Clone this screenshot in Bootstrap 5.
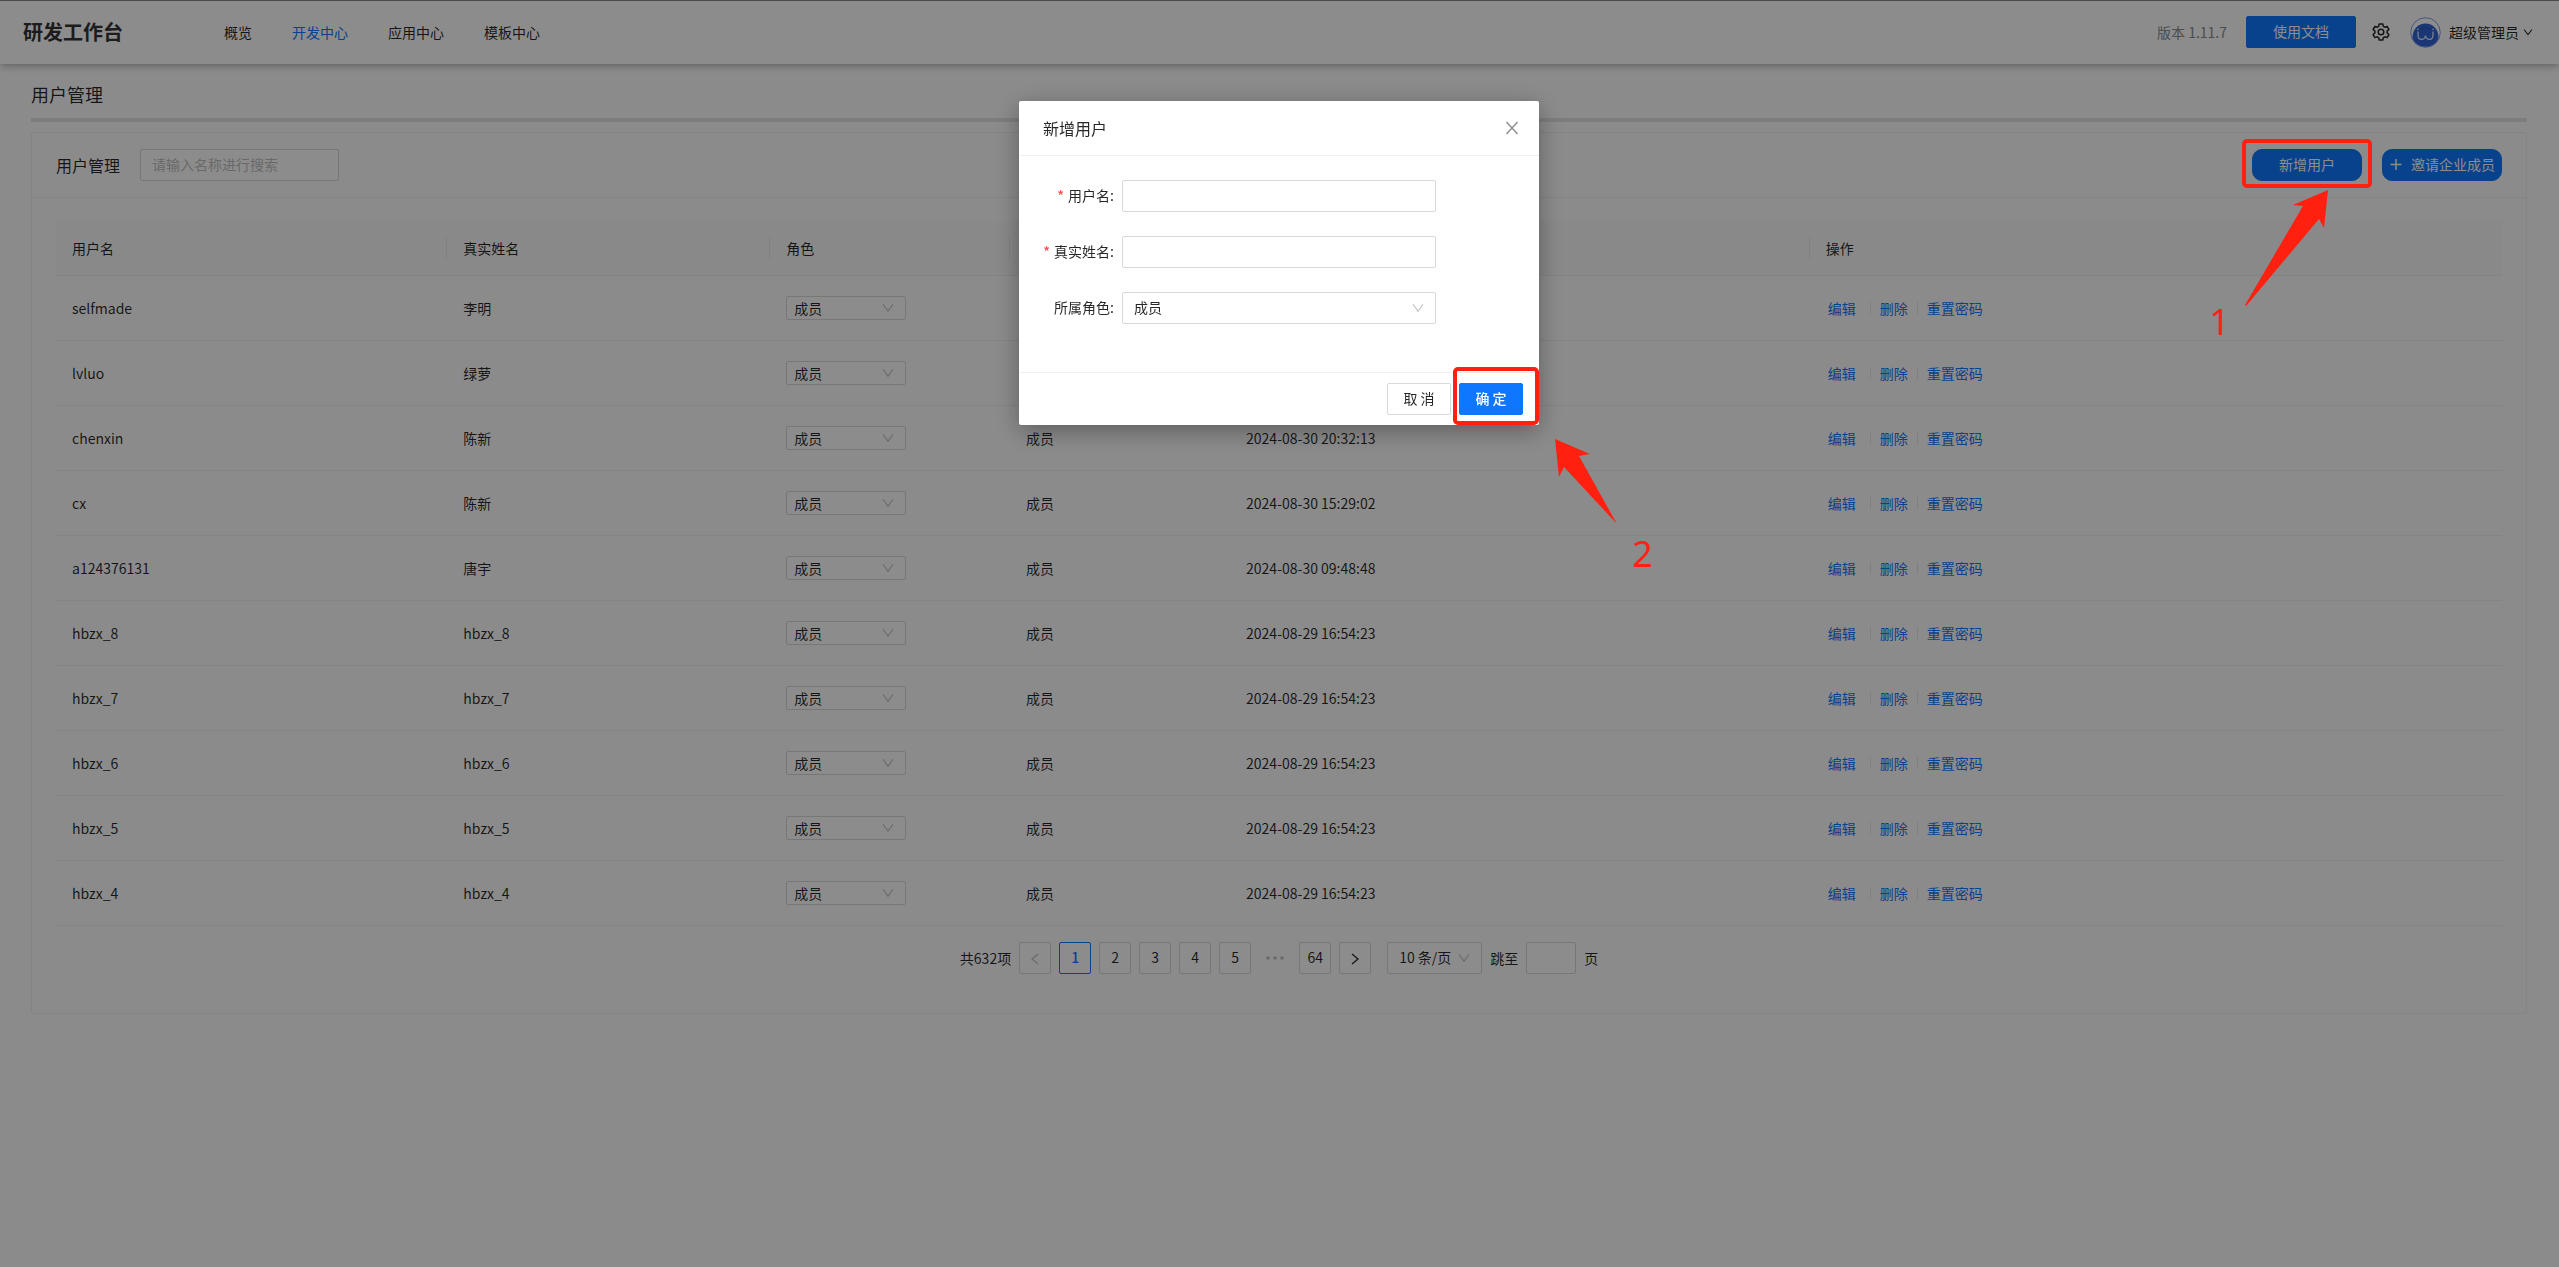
<!DOCTYPE html>
<html lang="zh-CN">
<head>
<meta charset="utf-8">
<meta name="viewport" content="width=device-width, initial-scale=1">
<title>研发工作台 - 用户管理</title>
<link rel="stylesheet" href="https://cdn.jsdelivr.net/npm/bootstrap@5.3.0/dist/css/bootstrap.min.css">
<style>
  :root { --brand: #0f77ff; --line: #f0f0f0; --ctl: #d9d9d9; --ink: rgba(0,0,0,.85); --mark-red: #ff2010; }
  body { font-family: "Noto Sans CJK SC", "Noto Sans", sans-serif; font-size: 14px; line-height: 22px; color: var(--ink); background: #fefefe; overflow: hidden; }
  a { color: var(--brand); text-decoration: none; }
  .btn, .form-control, .form-select { font-size: 14px; line-height: 22px; height: 32px; border-radius: 2px; color: var(--ink); }
  .btn { padding: 3px 15px 5px; }
  .btn-primary { --bs-btn-bg: var(--brand); --bs-btn-border-color: var(--brand); color: #fff; }
  .form-control, .form-select { border-color: var(--ctl); padding: 3px 11px 5px; box-shadow: none; }
  .form-control::placeholder { color: #bfbfbf; }
  .form-select { background-image: url("data:image/svg+xml,%3Csvg xmlns='http://www.w3.org/2000/svg' viewBox='0 0 12 12'%3E%3Cpath fill='none' stroke='%23bfbfbf' stroke-width='1.1' d='M1 2.2l5 7 5-7'/%3E%3C/svg%3E"); background-size: 12px 12px; background-position: right 11px center; }

  .topbar { height: 64px; border-top: 1px solid #868688; background: #fff; padding: 0 26px 1px 23px; box-shadow: 0 2px 8px rgba(0,0,0,.3); }
  .brand-name { font-size: 20px; font-weight: 700; width: 201px; color: #333; }
  .topnav { gap: 40px; }
  .topnav a { color: var(--ink); padding: 0; }
  .topnav a.active { color: var(--brand); }
  .version { color: #8c8c8c; margin-right: 19px; }
  .btn-wide { width: 110px; }
  .icon-btn { color: var(--ink); }

  .page-main { padding: 16px 32px 0 31px; }
  .page-title { font-size: 18px; line-height: 28px; margin: 0; padding-bottom: 10px; font-weight: 400; border-bottom: 4px solid #e4e4e4; box-sizing: content-box; }
  .panel { margin-top: 10px; border: 1px solid var(--line); border-radius: 2px; background: transparent; }
  .panel-head { height: 65px; padding: 0 24px; border-bottom: 1px solid var(--line); }
  .panel-name { font-size: 16px; margin: 0 20px 0 0; font-weight: 400; line-height: 24px; }
  .search-box { width: 199px; }
  .btn-round { border-radius: 10px; }
  .btn-invite { width: 120px; padding: 3px 6px 5px; }
  .panel-body { padding: 23px 24px 39px; }

  .user-table { table-layout: fixed; border-collapse: separate; border-spacing: 0; margin: 0; --bs-table-bg: transparent; --bs-table-color: var(--ink); color: var(--ink); }
  .user-table > thead th { background: #f9f9f9; height: 55px; font-weight: 400; position: relative; }
  .user-table > * > tr > * { padding: 0 16px; vertical-align: middle; border-bottom: 1px solid var(--line); }
  .user-table > tbody td { height: 65px; }
  .user-table thead th:not(:last-child)::after { content: ""; position: absolute; right: 0; top: 16px; height: 22px; border-right: 1px solid #ececec; }
  .c-user { width: 16%; } .c-name { width: 13.2%; } .c-role { width: 9.8%; } .c-tag { width: 9%; } .c-time { width: 23.7%; }
  .role-select { width: 120px; height: 24px; padding: 0 7px; line-height: 20px; vertical-align: middle; }
  .user-table td > .role-select { display: block; }
  .actions a:first-child { padding: 0 5px 0 2px; }
  .vr-line { width: 1px; height: 12px; margin: 0 9px; background: #e8e8e8; }

  .pager { margin-top: 16px; gap: 8px; }
  .pager .page-btn { width: 32px; padding: 3px 0 5px; border: 1px solid var(--ctl); background: #fff; }
  .pager .page-btn.active { border-color: var(--brand); color: var(--brand); font-weight: 500; }
  .pager .page-btn:disabled { color: #bfbfbf; opacity: 1; }
  .dots { width: 32px; color: #bfbfbf; }
  .size-select { width: 95px; margin-left: 8px; }
  .jump-box { width: 50px; }

  .modal-backdrop.show { opacity: .45; }
  .modal-layer { padding-right: 1px; }
  .user-modal { max-width: 520px; margin: 101px auto; }
  .user-modal .modal-content { border: 0; border-radius: 2px; box-shadow: 0 6px 24px rgba(0,0,0,.35); color: var(--ink); }
  .user-modal .modal-header { height: 55px; padding: 0 20px 0 24px; border-bottom: 1px solid var(--line); border-radius: 0; }
  .user-modal .modal-title { font-size: 16px; line-height: 22px; font-weight: 400; }
  .close-x { border: 0; background: none; padding: 0; color: #8c8c8c; line-height: 0; }
  .user-modal .modal-body { padding: 24px 24px 24px 20px; }
  .field { margin-bottom: 24px; }
  .field-label { width: 75px; margin-right: 8px; padding-bottom: 2px; text-align: right; white-space: nowrap; }
  .field-label .req { color: #ff4d4f; margin-right: 4px; font-weight: 500; }
  .field .form-control, .field .form-select { width: 314px; }
  .user-modal .modal-footer { padding: 10px 16px; gap: 8px; border-top: 1px solid var(--line); border-radius: 0; }
  .user-modal .modal-footer > * { margin: 0; width: 64px; padding: 3px 0 5px; }
  .btn-cancel { border: 1px solid var(--ctl); background: #fff; }

  .note { position: absolute; z-index: 2000; pointer-events: none; overflow: visible; }
  .note rect { fill: none; stroke: var(--mark-red); stroke-width: 4; }
  .note path, .note text { fill: var(--mark-red); }
  .note text { font-family: "Noto Sans", sans-serif; font-size: 36px; }
  .note-add { top: 130px; right: 179px; }
  .note-ok { top: 259px; left: 430px; }
</style>
</head>
<body>
<header class="topbar d-flex align-items-center position-relative">
  <div class="brand-name">研发工作台</div>
  <nav class="topnav d-flex">
    <a href="#">概览</a>
    <a href="#" class="active">开发中心</a>
    <a href="#">应用中心</a>
    <a href="#">模板中心</a>
  </nav>
  <div class="ms-auto d-flex align-items-center">
    <span class="version">版本 1.11.7</span>
    <button type="button" class="btn btn-primary btn-wide">使用文档</button>
    <a href="#" class="icon-btn d-flex ms-3" aria-label="设置">
      <svg width="18" height="18" viewBox="0 0 18 18" fill="none" stroke="currentColor" stroke-width="1.5" stroke-linejoin="round"><path d="M7.2 1h3.6l.5 2.3 1.5.9 2.3-.8 1.8 3.1-1.8 1.6v1.8l1.8 1.6-1.8 3.1-2.3-.8-1.5.9-.5 2.3H7.2l-.5-2.3-1.5-.9-2.3.8-1.8-3.1 1.8-1.6V8.1L1.1 6.5l1.8-3.1 2.3.8 1.5-.9z"/><circle cx="9" cy="9" r="2.8"/></svg>
    </a>
    <a href="#" class="icon-btn d-flex align-items-center ms-3">
      <svg class="me-2 ms-1" width="31" height="31" viewBox="0 0 31 31"><circle cx="15.5" cy="15.5" r="14.8" fill="#fff" stroke="#7f9de0" stroke-width="1"/><path d="M2.500 21C2.500 12 8 6.500 15.500 6.500S28.500 12 28.500 21c-2 5.500-7 8.700-13 8.700S4.500 26.500 2.500 21z" fill="#3263d6"/><path d="M8 13.500q7.500-4.500 15 0" fill="none" stroke="#1f46a8" stroke-dasharray="2 1.5"/><path d="M8 14.500v3.500c0 6 7 5.500 7.500.5.500 5 7.500 5.500 7.500-.5v-3.500" fill="none" stroke="#dfe8ff" stroke-width="1.3"/><path d="M7 12.300h2M22 12.300h2" stroke="#dfe8ff"/></svg>
      <span>超级管理员</span>
      <svg class="ms-1" width="10" height="10" viewBox="0 0 10 10" fill="none" stroke="currentColor" stroke-width="1.1"><path d="M1 2.5l4 5 4-5"/></svg>
    </a>
  </div>
</header>

<main class="page-main">
  <h1 class="page-title">用户管理</h1>
  <section class="panel">
    <div class="panel-head d-flex align-items-center">
      <h2 class="panel-name">用户管理</h2>
      <input class="form-control search-box" type="text" placeholder="请输入名称进行搜索" aria-label="搜索">
      <div class="ms-auto d-flex">
        <button type="button" class="btn btn-primary btn-wide btn-round me-3">新增用户</button>
        <button type="button" class="btn btn-primary btn-invite btn-round d-flex align-items-center justify-content-between ms-1">
          <svg width="14" height="14" viewBox="0 0 14 14" stroke="currentColor" stroke-width="1.5"><path d="M7 2v11M1.500 7.500h11"/></svg><span>邀请企业成员</span>
        </button>
      </div>
    </div>
    <div class="panel-body">
      <table class="table user-table">
        <colgroup><col class="c-user"><col class="c-name"><col class="c-role"><col class="c-tag"><col class="c-time"><col></colgroup>
        <thead><tr><th>用户名</th><th>真实姓名</th><th>角色</th><th></th><th></th><th>操作</th></tr></thead>
        <tbody id="userRows"></tbody>
      </table>
      <div class="pager d-flex align-items-center justify-content-center">
        <span>共632项</span>
        <button type="button" class="btn page-btn" disabled aria-label="上一页"><svg width="10" height="12" viewBox="0 0 10 12" fill="none" stroke="currentColor" stroke-width="1.1"><path d="M8 1L2 6l6 5"/></svg></button>
        <button type="button" class="btn page-btn active">1</button>
        <button type="button" class="btn page-btn">2</button>
        <button type="button" class="btn page-btn">3</button>
        <button type="button" class="btn page-btn">4</button>
        <button type="button" class="btn page-btn">5</button>
        <span class="dots d-flex justify-content-center"><svg width="18" height="4" viewBox="0 0 18 4" fill="currentColor"><circle cx="2" cy="2" r="1.8"/><circle cx="9" cy="2" r="1.8"/><circle cx="16" cy="2" r="1.8"/></svg></span>
        <button type="button" class="btn page-btn">64</button>
        <button type="button" class="btn page-btn" aria-label="下一页"><svg width="10" height="12" viewBox="0 0 10 12" fill="none" stroke="currentColor" stroke-width="1.3"><path d="M2 1l6 5-6 5"/></svg></button>
        <select class="form-select size-select" aria-label="每页条数"><option>10 条/页</option></select>
        <label for="jumpTo">跳至</label>
        <input id="jumpTo" class="form-control jump-box" type="text">
        <span>页</span>
      </div>
    </div>
  </section>
</main>

<div class="modal-backdrop show"></div>
<div class="modal modal-layer show d-block" tabindex="-1" role="dialog" aria-labelledby="modalTitle">
  <div class="modal-dialog user-modal">
    <form class="modal-content">
      <div class="modal-header">
        <h5 class="modal-title" id="modalTitle">新增用户</h5>
        <button type="button" class="close-x" aria-label="关闭"><svg width="14" height="14" viewBox="0 0 14 14" fill="none" stroke="currentColor" stroke-width="1.4"><path d="M1.500 1l11 12M12.500 1l-11 12"/></svg></button>
      </div>
      <div class="modal-body">
        <div class="field d-flex align-items-center"><label class="field-label" for="fUser"><span class="req">*</span>用户名:</label><input id="fUser" class="form-control" type="text"></div>
        <div class="field d-flex align-items-center"><label class="field-label" for="fReal"><span class="req">*</span>真实姓名:</label><input id="fReal" class="form-control" type="text"></div>
        <div class="field d-flex align-items-center"><label class="field-label" for="fRole">所属角色:</label><select id="fRole" class="form-select"><option>成员</option></select></div>
      </div>
      <div class="modal-footer">
        <button type="button" class="btn btn-cancel">取 消</button>
        <button type="button" class="btn btn-primary fw-medium">确 定</button>
      </div>
      <svg class="note note-ok" width="220" height="220" viewBox="0 0 220 220">
        <rect x="6" y="9" width="82" height="54" rx="3"/>
        <path d="M106 79l35 15-11 2 38 68-53-57-5 10z"/>
        <text x="183" y="207">2</text>
      </svg>
    </form>
  </div>
</div>

<svg class="note note-add" width="180" height="215" viewBox="0 0 180 215">
  <rect x="44" y="11" width="126" height="45" rx="3"/>
  <path d="M128 60l-35 15 10 1-58 99 1 1 73-87 5 9z"/>
  <text x="9" y="205">1</text>
</svg>

<script>
  const users = [
    ["selfmade", "李明", "", ""],
    ["lvluo", "绿萝", "", ""],
    ["chenxin", "陈新", "成员", "2024-08-30 20:32:13"],
    ["cx", "陈新", "成员", "2024-08-30 15:29:02"],
    ["a124376131", "唐宇", "成员", "2024-08-30 09:48:48"],
    ...[8, 7, 6, 5, 4].map(n => ["hbzx_" + n, "hbzx_" + n, "成员", "2024-08-29 16:54:23"])
  ];
  document.getElementById("userRows").innerHTML = users.map(([u, n, r, t]) => `
    <tr><td>${u}</td><td>${n}</td>
      <td><select class="form-select role-select" aria-label="${u} 角色"><option>成员</option></select></td>
      <td>${r}</td><td>${t}</td>
      <td><div class="actions d-flex align-items-center"><a href="#">编辑</a><span class="vr-line"></span><a href="#">删除</a><span class="vr-line"></span><a href="#">重置密码</a></div></td></tr>`).join("");
</script>
<script src="https://cdn.jsdelivr.net/npm/bootstrap@5.3.0/dist/js/bootstrap.bundle.min.js"></script>
</body>
</html>
